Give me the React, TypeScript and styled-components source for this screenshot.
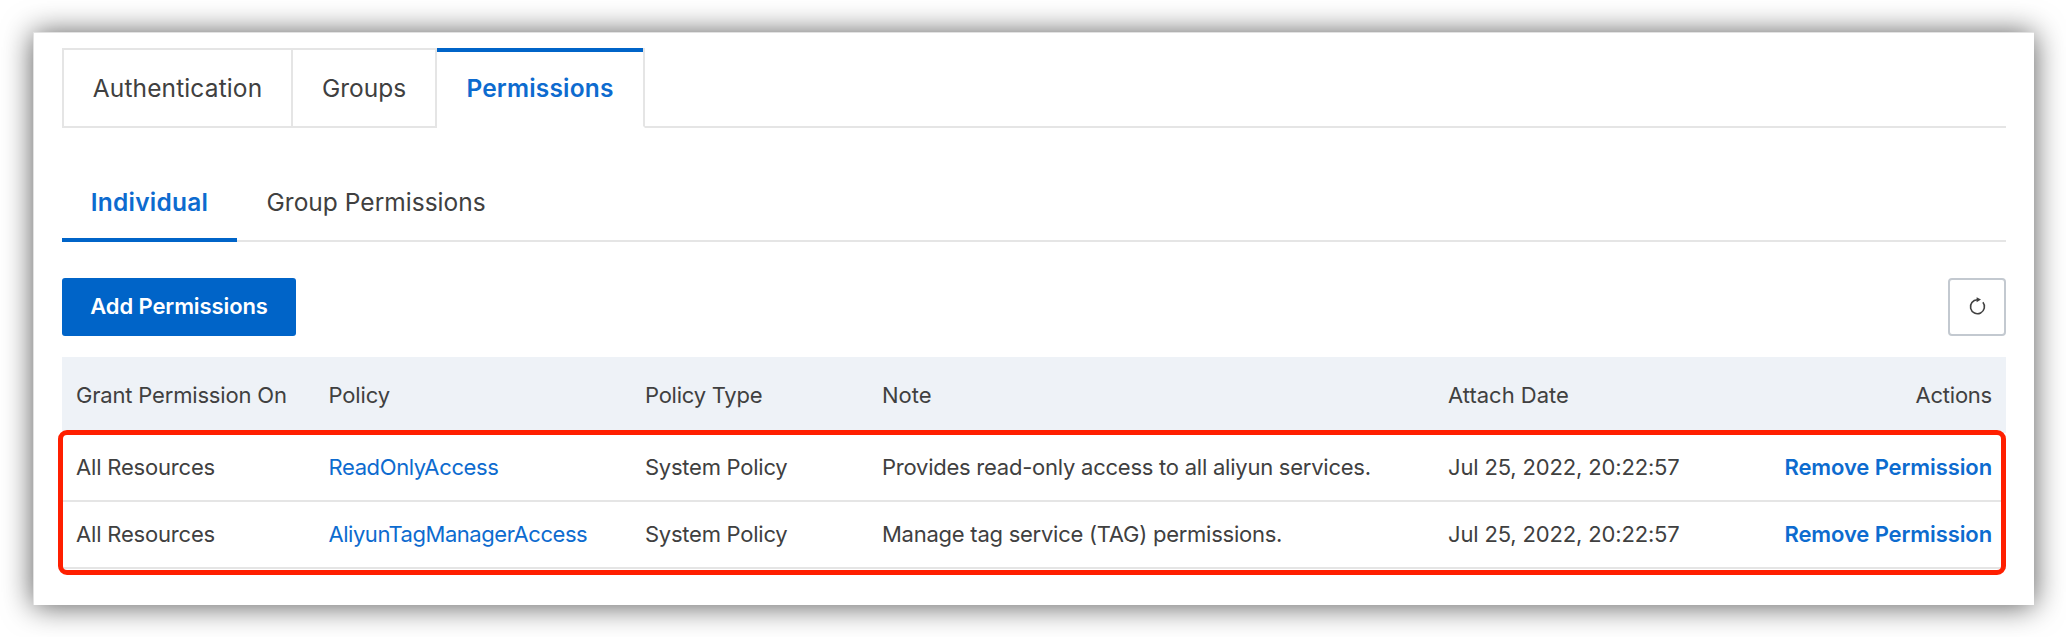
import React from "react";
import styled, { createGlobalStyle } from "styled-components";

const BLUE = "#0064c8";
const LINK = "#0d6bcf";
const LINE = "#e5e5e5";

const GlobalStyle = createGlobalStyle`
  *, *::before, *::after { box-sizing: border-box; }
  body {
    margin: 0;
    background: #fff;
    color: #404040;
    font-family: Inter, "Liberation Sans", sans-serif;
  }
`;

const Page = styled.div`
  width: 2066px;
  height: 637px;
  padding: 32px 32px 32px 33px;
  overflow: hidden;
`;

const Card = styled.main`
  height: 573px;
  padding: 16px 28px 0 29px;
  background: #fff;
  box-shadow: inset 1px 1px #e2e2e2, 0 1px 28px rgba(0, 0, 0, 0.66);
`;

const Label = styled.span<{ $spacing?: number }>`
  letter-spacing: ${(p) => p.$spacing ?? 0}px;
`;

const TabBar = styled.nav`
  display: flex;
  height: 80px;
`;

const Tab = styled.div<{ $width: number; $active?: boolean; $first?: boolean }>`
  display: flex;
  align-items: center;
  justify-content: center;
  position: relative;
  width: ${(p) => p.$width}px;
  border: 2px solid ${LINE};
  border-left-width: ${(p) => (p.$first ? 2 : 0)}px;
  border-bottom-color: ${(p) => (p.$active ? "transparent" : LINE)};
  font-size: 24.5px;
  font-weight: ${(p) => (p.$active ? 600 : 400)};
  color: ${(p) => (p.$active ? LINK : "inherit")};

  &::before {
    content: "";
    display: ${(p) => (p.$active ? "block" : "none")};
    position: absolute;
    inset: -2px 0 auto 0;
    height: 4px;
    background: ${BLUE};
  }
`;

const TabFill = styled.div`
  flex: 1;
  border-bottom: 2px solid ${LINE};
`;

const SubTabBar = styled.nav`
  display: flex;
  height: 82px;
  margin-top: 32px;
  box-shadow: inset 0 -2px ${LINE};
`;

const SubTab = styled.div<{ $active?: boolean }>`
  display: flex;
  align-items: center;
  justify-content: center;
  width: ${(p) => (p.$active ? "175px" : "auto")};
  padding: 1px ${(p) => (p.$active ? 0 : 29.5)}px 0;
  font-size: 24.5px;
  font-weight: ${(p) => (p.$active ? 600 : 400)};
  color: ${(p) => (p.$active ? LINK : "inherit")};
  box-shadow: ${(p) => (p.$active ? `inset 0 -4px ${BLUE}` : "none")};
`;

const Toolbar = styled.div`
  display: flex;
  justify-content: space-between;
  margin: 36px 0 21px;
`;

const PrimaryButton = styled.button`
  width: 234px;
  height: 58px;
  padding: 0 0 2px;
  border: 0;
  border-radius: 3px;
  background: ${BLUE};
  color: #fff;
  font: 600 22px Inter, sans-serif;
`;

const IconButton = styled.button`
  display: flex;
  align-items: center;
  justify-content: center;
  width: 58px;
  height: 58px;
  padding: 0 1px 2px 0;
  border: 2px solid #c3c9d0;
  border-radius: 4px;
  background: #fff;
  color: #404040;
`;

const TableArea = styled.section`
  position: relative;
  font-size: 22px;
`;

const Row = styled.div`
  display: grid;
  grid-template-columns: 252.5px 316.5px 237px 566px 300px 272px;
  align-items: center;
  height: 67px;
  padding-bottom: 1px;
  border-bottom: 2px solid ${LINE};
`;

const FirstRow = styled(Row)`
  height: 69px;
  padding: 1px 0 0;
`;

const HeadRow = styled(Row)`
  height: 76px;
  padding-bottom: 1px;
  border-bottom: 0;
  background: #eef2f7;
`;

const Cell = styled.div<{ $end?: boolean }>`
  padding: 0 14px;
  white-space: nowrap;
  text-align: ${(p) => (p.$end ? "right" : "left")};
`;

const PolicyLink = styled.a`
  color: ${LINK};
`;

const ActionLink = styled.a`
  color: ${LINK};
  font-weight: 600;
`;

const Highlight = styled.div`
  position: absolute;
  inset: 73px 0.5px -6px -4.5px;
  border: 5px solid #ff1f00;
  border-radius: 9px;
  pointer-events: none;
`;

const columns = [
  { title: "Grant Permission On", spacing: -0.18 },
  { title: "Policy", spacing: -0.15 },
  { title: "Policy Type", spacing: -0.25 },
  { title: "Note", spacing: 0 },
  { title: "Attach Date", spacing: 0 },
  { title: "Actions", spacing: -0.24, end: true },
];

const policies = [
  {
    name: "ReadOnlyAccess",
    nameSpacing: -0.37,
    note: "Provides read-only access to all aliyun services.",
    noteSpacing: -0.24,
  },
  {
    name: "AliyunTagManagerAccess",
    nameSpacing: -0.46,
    note: "Manage tag service (TAG) permissions.",
    noteSpacing: -0.25,
  },
];

const DATE = "Jul 25, 2022, 20:22:57";

function RefreshIcon() {
  return (
    <svg width="20" height="20" viewBox="0 0 20 20" fill="none">
      <path
        d="M15.9 6.3A7 7 0 1 1 10.3 3.7"
        stroke="currentColor"
        strokeWidth="1.6"
      />
      <path d="M9.6 1.2 14 3.6 9.6 6.2Z" fill="currentColor" />
    </svg>
  );
}

export default function App() {
  return (
    <Page>
      <GlobalStyle />
      <Card>
        <TabBar>
          <Tab $width={231} $first>
            <Label $spacing={0.13}>Authentication</Label>
          </Tab>
          <Tab $width={144}>
            <Label>Groups</Label>
          </Tab>
          <Tab $width={208} $active>
            <Label $spacing={0.18}>Permissions</Label>
          </Tab>
          <TabFill />
        </TabBar>
        <SubTabBar>
          <SubTab $active>
            <Label $spacing={0.25}>Individual</Label>
          </SubTab>
          <SubTab>
            <Label $spacing={0.02}>Group Permissions</Label>
          </SubTab>
        </SubTabBar>
        <Toolbar>
          <PrimaryButton>
            <Label $spacing={-0.1}>Add Permissions</Label>
          </PrimaryButton>
          <IconButton aria-label="Refresh">
            <RefreshIcon />
          </IconButton>
        </Toolbar>
        <TableArea>
          <HeadRow>
            {columns.map((c) => (
              <Cell key={c.title} $end={c.end}>
                <Label $spacing={c.spacing}>{c.title}</Label>
              </Cell>
            ))}
          </HeadRow>
          {policies.map((p, i) => {
            const PolicyRow = i === 0 ? FirstRow : Row;
            return (
              <PolicyRow key={p.name}>
                <Cell>
                  <Label $spacing={-0.19}>All Resources</Label>
                </Cell>
                <Cell>
                  <PolicyLink>
                    <Label $spacing={p.nameSpacing}>{p.name}</Label>
                  </PolicyLink>
                </Cell>
                <Cell>
                  <Label $spacing={-0.25}>System Policy</Label>
                </Cell>
                <Cell>
                  <Label $spacing={p.noteSpacing}>{p.note}</Label>
                </Cell>
                <Cell>
                  <Label $spacing={-0.16}>{DATE}</Label>
                </Cell>
                <Cell $end>
                  <ActionLink>
                    <Label $spacing={-0.1}>Remove Permission</Label>
                  </ActionLink>
                </Cell>
              </PolicyRow>
            );
          })}
          <Highlight />
        </TableArea>
      </Card>
    </Page>
  );
}
